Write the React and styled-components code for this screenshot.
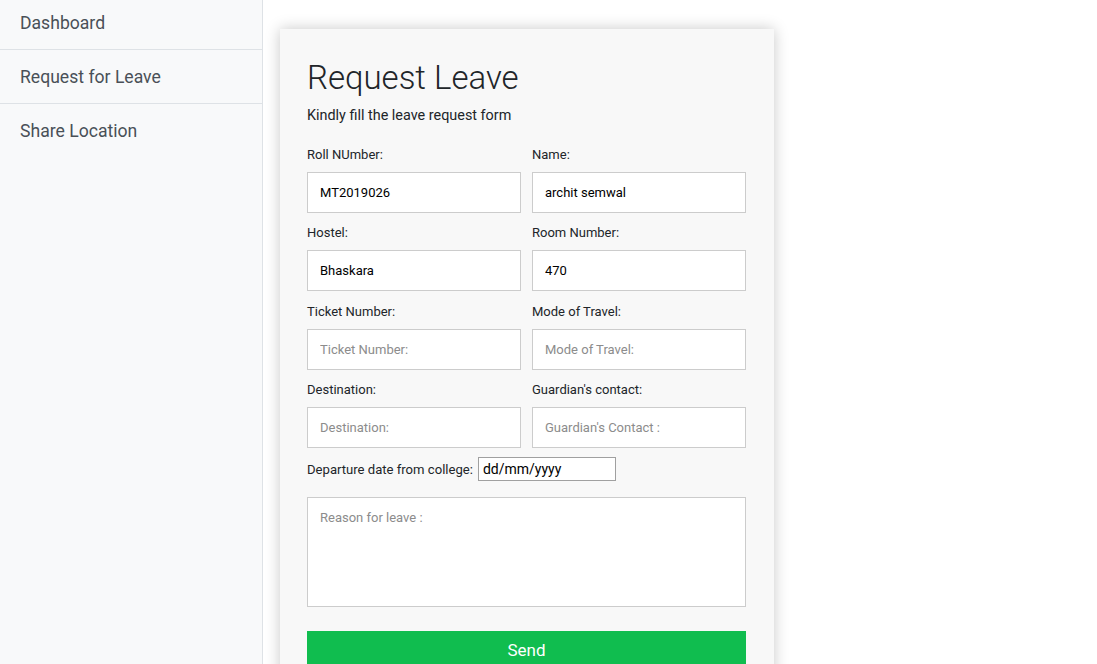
import React from 'react';
import styled, { createGlobalStyle } from 'styled-components';

const GlobalStyle = createGlobalStyle`
  html, body {
    margin: 0;
    padding: 0;
    overflow: hidden;
    background: #ffffff;
    font-family: 'Roboto', 'Liberation Sans', sans-serif;
  }
  * {
    box-sizing: border-box;
  }
`;

const fields = [
  { label: 'Roll NUmber:', value: 'MT2019026' },
  { label: 'Name:', value: 'archit semwal' },
  { label: 'Hostel:', value: 'Bhaskara' },
  { label: 'Room Number:', value: '470' },
  { label: 'Ticket Number:', placeholder: 'Ticket Number:' },
  { label: 'Mode of Travel:', placeholder: 'Mode of Travel:' },
  { label: 'Destination:', placeholder: 'Destination:' },
  { label: "Guardian's contact:", placeholder: "Guardian's Contact :" },
];

const menu = ['Dashboard', 'Request for Leave', 'Share Location'];

export default function App() {
  return (
    <Page>
      <GlobalStyle />
      <Sidebar>
        <Menu>
          {menu.map((item, i) => (
            <MenuItem key={item} last={i === menu.length - 1}>
              {item}
            </MenuItem>
          ))}
        </Menu>
      </Sidebar>
      <Main>
        <Card>
          <Title>Request Leave</Title>
          <Subtitle>Kindly fill the leave request form</Subtitle>
          <FieldGrid>
            {fields.map((f) => (
              <Field key={f.label}>
                <Label>{f.label}</Label>
                <TextInput
                  type="text"
                  defaultValue={f.value}
                  placeholder={f.placeholder}
                />
              </Field>
            ))}
          </FieldGrid>
          <DateRow>
            <DateLabel>Departure date from college:</DateLabel>
            <DateInput type="text" defaultValue="dd/mm/yyyy" readOnly />
          </DateRow>
          <Reason placeholder="Reason for leave :" />
          <SendButton>Send</SendButton>
        </Card>
      </Main>
    </Page>
  );
}

const Page = styled.div`
  display: flex;
  min-height: 100vh;
`;

const Sidebar = styled.nav`
  width: 263px;
  flex-shrink: 0;
  min-height: 100vh;
  background: #f8f9fa;
  border-right: 1px solid #dee2e6;
`;

const Menu = styled.ul`
  list-style: none;
  margin: -4px 0 0;
  padding: 0;
`;

const MenuItem = styled.li`
  padding: 14px 20px 12px;
  font-size: 17.6px;
  line-height: 27px;
  color: #495057;
  border-bottom: ${(p) => (p.last ? 'none' : '1px solid #dee2e6')};
`;

const Main = styled.main`
  flex: 1;
  padding: 29px 0 0 17px;
`;

const Card = styled.section`
  width: 494px;
  padding: 27px 28px 40px 27px;
  background: #f8f8f8;
  box-shadow: 0 0 14px rgba(0, 0, 0, 0.22);
`;

const Title = styled.h1`
  margin: 0;
  font-size: 33px;
  font-weight: 300;
  line-height: 43px;
  color: #212529;
`;

const Subtitle = styled.p`
  margin: 6px 0 17px;
  font-size: 14.4px;
  line-height: 22.5px;
  color: #212529;
`;

const FieldGrid = styled.div`
  display: grid;
  grid-template-columns: 214px 214px;
  column-gap: 11px;
  row-gap: 10.67px;
`;

const Field = styled.div`
  display: flex;
  flex-direction: column;
`;

const Label = styled.label`
  height: 20px;
  margin-bottom: 7px;
  font-size: 13px;
  line-height: 19.5px;
  color: #212529;
`;

const TextInput = styled.input`
  height: 41px;
  padding: 0 12px;
  border: 1px solid #cccccc;
  background: #ffffff;
  font-family: inherit;
  font-size: 13px;
  color: #000000;
  outline: none;

  &::placeholder {
    color: #8c8c8c;
  }
`;

const DateRow = styled.div`
  display: flex;
  align-items: center;
  gap: 5px;
  margin-top: 9px;
`;

const DateLabel = styled.span`
  font-size: 13.1px;
  color: #212529;
`;

const DateInput = styled.input`
  width: 138px;
  height: 24px;
  padding: 0 4px;
  border: 1px solid #a0a0a0;
  background: #ffffff;
  font-family: inherit;
  font-size: 14px;
  color: #000000;
  outline: none;
`;

const Reason = styled.textarea`
  display: block;
  width: 100%;
  height: 110px;
  margin-top: 16px;
  padding: 12px;
  border: 1px solid #cccccc;
  background: #ffffff;
  font-family: inherit;
  font-size: 13px;
  resize: none;
  outline: none;

  &::placeholder {
    color: #8c8c8c;
  }
`;

const SendButton = styled.button`
  display: block;
  width: 100%;
  height: 38px;
  margin-top: 24px;
  border: none;
  background: #10bd4f;
  color: #ffffff;
  font-family: inherit;
  font-size: 17px;
  cursor: pointer;
`;
